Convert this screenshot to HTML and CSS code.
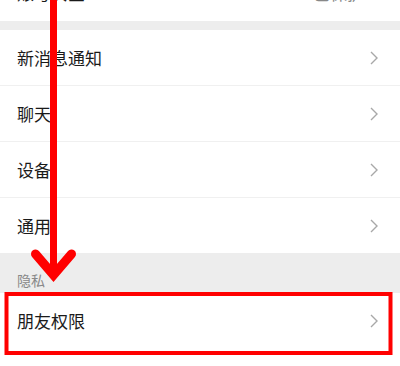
FILE: index.html
```html
<!DOCTYPE html>
<html lang="zh">
<head>
<meta charset="utf-8">
<link rel="stylesheet" href="styles.css">
</head>
<body>
<div class="page">
  <div class="group top">
    <div class="row"><span class="label">账号安全</span><span class="value">已保护</span></div>
  </div>
  <div class="gap"></div>
  <div class="group">
    <div class="row"><span class="label">新消息通知</span><svg class="chev" viewBox="0 0 8 14"><polyline points="1,1 7,7 1,13"/></svg></div>
    <div class="row"><span class="label">聊天</span><svg class="chev" viewBox="0 0 8 14"><polyline points="1,1 7,7 1,13"/></svg></div>
    <div class="row"><span class="label">设备</span><svg class="chev" viewBox="0 0 8 14"><polyline points="1,1 7,7 1,13"/></svg></div>
    <div class="row"><span class="label">通用</span><svg class="chev" viewBox="0 0 8 14"><polyline points="1,1 7,7 1,13"/></svg></div>
  </div>
  <div class="section-title">隐私</div>
  <div class="group">
    <div class="row"><span class="label">朋友权限</span><svg class="chev" viewBox="0 0 8 14"><polyline points="1,1 7,7 1,13"/></svg></div>
  </div>
</div>
<svg class="annot" viewBox="0 0 400 366" width="400" height="366">
  <rect x="50" y="0" width="7" height="268" fill="#ff0000"/>
  <polyline points="35.5,254 53.5,275 71.5,254" fill="none" stroke="#ff0000" stroke-width="9" stroke-linecap="round" stroke-linejoin="miter"/>
  <rect x="6.5" y="294" width="384" height="59" fill="none" stroke="#ff0000" stroke-width="4"/>
</svg>
</body>
</html>
```
FILE: styles.css
```css
html, body {
  margin: 0;
  padding: 0;
  background: #ffffff;
}
body {
  width: 400px;
  height: 366px;
  overflow: hidden;
  position: relative;
  font-family: "Noto Sans CJK SC", "Noto Sans", sans-serif;
}
.page {
  display: flex;
  flex-direction: column;
}
.group {
  background: #ffffff;
  display: flex;
  flex-direction: column;
}
.top {
  margin-top: -36px;
}
.gap {
  height: 9px;
  background: #ededed;
}
.row {
  height: 55px;
  display: flex;
  align-items: center;
  justify-content: space-between;
  padding: 0 22px 0 17px;
  position: relative;
  border-bottom: 1px solid #f0f0f0;
}
.group .row:last-child {
  border-bottom: none;
}
.top .row {
  height: 57px;
}
.label {
  font-size: 17px;
  color: #1a1a1a;
}
.value {
  font-size: 17px;
  color: #888888;
  margin-right: 14px;
}
.chev {
  width: 8px;
  height: 14px;
}
.chev polyline {
  fill: none;
  stroke: #a8a8a8;
  stroke-width: 1.4;
}
.section-title {
  height: 40px;
  background: #ededed;
  color: #888888;
  font-size: 14px;
  padding-left: 17px;
  display: flex;
  align-items: flex-end;
  box-sizing: border-box;
  line-height: 26px;
}
.annot {
  position: absolute;
  left: 0;
  top: 0;
  pointer-events: none;
}
```
